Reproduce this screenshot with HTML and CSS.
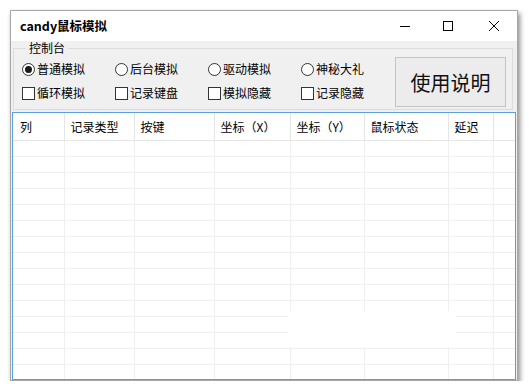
FILE: index.html
```html
<!DOCTYPE html>
<html lang="zh-CN">
<head>
    <meta charset="UTF-8">
    <title>candy鼠标模拟</title>
    <link rel="stylesheet" href="styles.css">
</head>
<body>
    <div class="window">
        <div class="titlebar">
            <span class="title">candy鼠标模拟</span>
            <div class="caption-buttons">
                <button class="caption-btn min" aria-label="最小化">
                    <svg width="10" height="10" viewBox="0 0 10 10"><path d="M0 5.5H10" stroke="#000" stroke-width="1"/></svg>
                </button>
                <button class="caption-btn max" aria-label="最大化">
                    <svg width="10" height="10" viewBox="0 0 10 10"><rect x="0.5" y="0.5" width="9" height="9" fill="none" stroke="#000" stroke-width="1"/></svg>
                </button>
                <button class="caption-btn close" aria-label="关闭">
                    <svg width="10" height="10" viewBox="0 0 10 10"><path d="M0 0L10 10M10 0L0 10" stroke="#000" stroke-width="1"/></svg>
                </button>
            </div>
        </div>

        <div class="client">
            <fieldset class="console">
                <legend>控制台</legend>
                <div class="console-body">
                    <div class="options">
                        <label class="option"><span class="radio checked"></span>普通模拟</label>
                        <label class="option"><span class="radio"></span>后台模拟</label>
                        <label class="option"><span class="radio"></span>驱动模拟</label>
                        <label class="option"><span class="radio"></span>神秘大礼</label>
                        <label class="option"><span class="checkbox"></span>循环模拟</label>
                        <label class="option"><span class="checkbox"></span>记录键盘</label>
                        <label class="option"><span class="checkbox"></span>模拟隐藏</label>
                        <label class="option"><span class="checkbox"></span>记录隐藏</label>
                    </div>
                    <button class="help-button">使用说明</button>
                </div>
            </fieldset>

            <div class="list-view">
                <table class="records">
                    <colgroup>
                        <col style="width: 51px">
                        <col style="width: 70px">
                        <col style="width: 80px">
                        <col style="width: 76px">
                        <col style="width: 74px">
                        <col style="width: 84px">
                        <col style="width: 45px">
                        <col>
                    </colgroup>
                    <thead>
                        <tr><th>列</th><th>记录类型</th><th>按键</th><th>坐标（X）</th><th>坐标（Y）</th><th>鼠标状态</th><th>延迟</th><th class="filler"></th></tr>
                    </thead>
                    <tbody>
                        <tr><td></td><td></td><td></td><td></td><td></td><td></td><td></td><td></td></tr>
                        <tr><td></td><td></td><td></td><td></td><td></td><td></td><td></td><td></td></tr>
                        <tr><td></td><td></td><td></td><td></td><td></td><td></td><td></td><td></td></tr>
                        <tr><td></td><td></td><td></td><td></td><td></td><td></td><td></td><td></td></tr>
                        <tr><td></td><td></td><td></td><td></td><td></td><td></td><td></td><td></td></tr>
                        <tr><td></td><td></td><td></td><td></td><td></td><td></td><td></td><td></td></tr>
                        <tr><td></td><td></td><td></td><td></td><td></td><td></td><td></td><td></td></tr>
                        <tr><td></td><td></td><td></td><td></td><td></td><td></td><td></td><td></td></tr>
                        <tr><td></td><td></td><td></td><td></td><td></td><td></td><td></td><td></td></tr>
                        <tr><td></td><td></td><td></td><td></td><td></td><td></td><td></td><td></td></tr>
                        <tr><td></td><td></td><td></td><td></td><td></td><td></td><td></td><td></td></tr>
                        <tr><td></td><td></td><td></td><td></td><td></td><td></td><td></td><td></td></tr>
                        <tr><td></td><td></td><td></td><td></td><td></td><td></td><td></td><td></td></tr>
                        <tr><td></td><td></td><td></td><td></td><td></td><td></td><td></td><td></td></tr>
                        <tr><td></td><td></td><td></td><td></td><td></td><td></td><td></td><td></td></tr>
                    </tbody>
                </table>
                <div class="repaint"></div>
            </div>
        </div>
    </div>
</body>
</html>
```

FILE: styles.css
```css
:root {
    --face-color: #f0f0f0;
    --frame-color: #a6a6a6;
    --group-border: #dcdcdc;
    --list-border: #5b9fe2;
    --grid-color: #efefef;
    --header-sep: #e5e5e5;
    --text-color: #000000;
}

* {
    box-sizing: border-box;
}

body {
    margin: 0;
    background-color: #ffffff;
    font-family: "Noto Sans CJK SC", "Noto Sans", sans-serif;
    font-size: 12px;
    color: var(--text-color);
}

.window {
    margin: 10px 0 0 10px;
    width: 508px;
    height: 371px;
    border: 1px solid var(--frame-color);
    background-color: var(--face-color);
    box-shadow: 2px 3px 5px rgb(0 0 0 / 0.45);
    display: flex;
    flex-direction: column;
}

.titlebar {
    height: 30px;
    background-color: #ffffff;
    display: flex;
    align-items: center;
    justify-content: space-between;
    flex-shrink: 0;
}

.title {
    padding-left: 9px;
    font-weight: 700;
    font-size: 12.5px;
    line-height: 16px;
}

.caption-buttons {
    display: flex;
    height: 100%;
}

.caption-btn {
    width: 46px;
    height: 100%;
    border: none;
    background: transparent;
    padding: 0;
    display: flex;
    align-items: center;
    justify-content: center;
}

.caption-btn.min {
    width: 40px;
}

.caption-btn svg {
    display: block;
}

.client {
    flex: 1;
    display: flex;
    flex-direction: column;
    min-height: 0;
}

/* group box */
.console {
    margin: 0 4px 0 2px;
    padding: 0 6px 2px 8px;
    border: 1px solid var(--group-border);
    min-width: 0;
}

.console legend {
    margin-left: 4px;
    padding: 0 3px;
    font-size: 12px;
    line-height: 14px;
}

.console-body {
    display: flex;
    align-items: flex-start;
}

.options {
    display: grid;
    grid-template-columns: repeat(4, 93px);
    row-gap: 8px;
    padding-top: 6px;
}

.option {
    display: flex;
    align-items: center;
    gap: 2px;
    height: 16px;
    line-height: 16px;
    white-space: nowrap;
}

.radio {
    width: 13px;
    height: 13px;
    border: 1px solid #333333;
    border-radius: 50%;
    background-color: #ffffff;
    display: flex;
    align-items: center;
    justify-content: center;
    flex-shrink: 0;
}

.radio.checked::after {
    content: "";
    width: 7px;
    height: 7px;
    border-radius: 50%;
    background-color: #1a1a1a;
}

.checkbox {
    width: 13px;
    height: 13px;
    border: 1px solid #333333;
    background-color: #ffffff;
    flex-shrink: 0;
}

.help-button {
    margin: 2px 0 0 1px;
    width: 111px;
    height: 50px;
    border: 1px solid #c4c4c4;
    background-color: #ececec;
    font-family: inherit;
    font-size: 20px;
    color: #111111;
    padding: 0;
}

/* list view */
.list-view {
    position: relative;
    flex: 1;
    margin: 2px 1px 0 1px;
    border: 1px solid var(--list-border);
    background-color: #ffffff;
    overflow: hidden;
}

.records {
    width: 100%;
    table-layout: fixed;
    border-collapse: collapse;
}

.records th {
    height: 27px;
    padding: 0 0 0 6px;
    text-align: left;
    font-weight: 400;
    font-size: 12px;
    border-right: 1px solid var(--header-sep);
    border-bottom: 1px solid var(--header-sep);
    white-space: nowrap;
    overflow: hidden;
}

.records th:first-child {
    padding-left: 7px;
}

.records th.filler {
    border-right: none;
}

.records td {
    height: 16px;
    padding: 0;
    border-right: 1px solid var(--grid-color);
    border-bottom: 1px solid var(--grid-color);
}

.records td:last-child {
    border-right: none;
}

/* unpainted patch left by the window redraw */
.repaint {
    position: absolute;
    left: 275px;
    top: 198px;
    width: 168px;
    height: 36px;
    background-color: #ffffff;
}
```
